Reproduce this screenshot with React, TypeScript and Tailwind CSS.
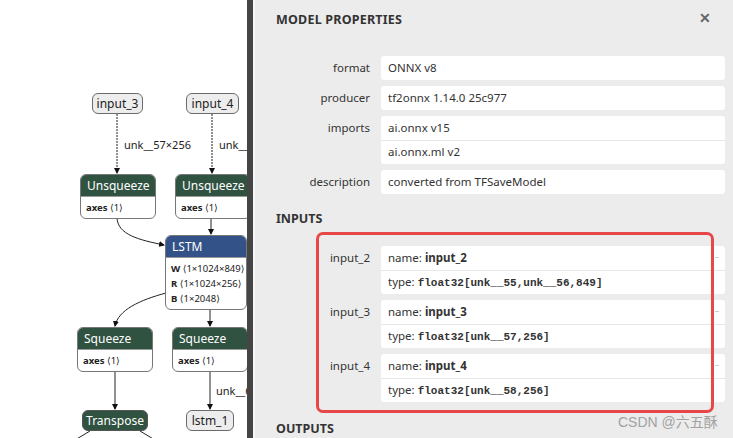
import React from "react";

const ui = { fontFamily: '"Noto Sans", "Open Sans", sans-serif' };
const mono = { fontFamily: '"Liberation Mono", "DejaVu Sans Mono", monospace' };

function Ghost({ label, x, y, w }: { label: string; x: number; y: number; w: number }) {
  return (
    <div
      className="absolute h-[21px] rounded-[6px] border border-[#6b6b6b] bg-[#ededed] text-[12px] leading-[19px] text-[#222] text-center"
      style={{ left: x, top: y, width: w }}
    >
      {label}
    </div>
  );
}

function OpNode({
  title,
  x,
  y,
  w,
  color = "bg-[#2f5241]",
  attrs,
}: {
  title: string;
  x: number;
  y: number;
  w: number;
  color?: string;
  attrs?: { k: string; v: string }[];
}) {
  return (
    <div
      className="absolute rounded-[6px] border border-[#777] overflow-hidden bg-white"
      style={{ left: x, top: y, width: w }}
    >
      <div className={`${color} h-[21px] px-[6px] text-[12px] leading-[21px] text-white`}>{title}</div>
      {attrs && (
        <div className="border-t border-[#999] px-[5px] py-[3px] text-[9.5px] text-[#222]">
          {attrs.map((a) => (
            <div key={a.k} className="leading-[15px] whitespace-nowrap">
              <span className="font-bold">{a.k}</span>{" "}
              <span style={{ fontFamily: '"DejaVu Sans", sans-serif' }}>⟨</span>
              {a.v}
              <span style={{ fontFamily: '"DejaVu Sans", sans-serif' }}>⟩</span>
            </div>
          ))}
        </div>
      )}
    </div>
  );
}

function Graph() {
  return (
    <div className="relative w-[247px] h-full overflow-hidden bg-white" style={ui}>
      <svg className="absolute inset-0" width="247" height="438">
        <defs>
          <marker id="ah" markerWidth="6" markerHeight="6" refX="5" refY="3" orient="auto">
            <path d="M0,0 L6,3 L0,6 z" fill="#111" />
          </marker>
        </defs>
        <g stroke="#222" strokeWidth="1" fill="none" markerEnd="url(#ah)">
          <path d="M117,114 L117,173" strokeDasharray="2 1" />
          <path d="M212,114 L212,173" strokeDasharray="2 1" />
          <path d="M117,217 C117,235 140,240 164,245" />
          <path d="M211,217 L211,234" />
          <path d="M166,293 C140,300 118,310 115,326" />
          <path d="M210,308 L210,326" />
          <path d="M115,370 L115,409" />
          <path d="M210,370 L210,409" />
        </g>
        <g stroke="#222" strokeWidth="1" fill="none">
          <path d="M90,431 L75,440" />
          <path d="M140,431 L155,440" />
        </g>
      </svg>
      <div className="absolute left-[124px] top-[137px] text-[11px] text-[#222]">unk__57×256</div>
      <div className="absolute left-[219px] top-[137px] text-[11px] text-[#222] whitespace-nowrap">unk__58×256</div>
      <div className="absolute left-[216px] top-[383px] text-[11px] text-[#222] whitespace-nowrap">unk__60×256</div>
      <Ghost label="input_3" x={92} y={93} w={51} />
      <Ghost label="input_4" x={186} y={93} w={53} />
      <OpNode title="Unsqueeze" x={80} y={174} w={76} attrs={[{ k: "axes", v: "1" }]} />
      <OpNode title="Unsqueeze" x={175} y={174} w={76} attrs={[{ k: "axes", v: "1" }]} />
      <OpNode
        title="LSTM"
        x={165}
        y={235}
        w={82}
        color="bg-[#335288]"
        attrs={[
          { k: "W", v: "1×1024×849" },
          { k: "R", v: "1×1024×256" },
          { k: "B", v: "1×2048" },
        ]}
      />
      <OpNode title="Squeeze" x={77} y={327} w={76} attrs={[{ k: "axes", v: "1" }]} />
      <OpNode title="Squeeze" x={172} y={327} w={76} attrs={[{ k: "axes", v: "1" }]} />
      <div className="absolute left-[82px] top-[410px] w-[66px] h-[21px] rounded-[6px] border border-[#555] bg-[#2f5241] text-[12px] leading-[19px] text-white text-center">
        Transpose
      </div>
      <Ghost label="lstm_1" x={186} y={410} w={48} />
    </div>
  );
}

function Prop({ label, values }: { label: string; values: React.ReactNode[] }) {
  return (
    <div className="flex gap-[11px]">
      <div className="w-[94px] shrink-0 text-right text-[11.5px] leading-[24px] text-[#333]">{label}</div>
      <div className="flex-1 rounded-[3px] bg-white">
        {values.map((v, i) => (
          <div
            key={i}
            className={`relative px-[7px] text-[11.5px] text-[#333] ${i > 0 ? "h-[24px] leading-[22px] border-t border-[#e6e6e6]" : "h-[24px] leading-[24px]"}`}
          >
            {v}
          </div>
        ))}
      </div>
    </div>
  );
}

function InputRow({ name, type }: { name: string; type: string }) {
  return (
    <Prop
      label={name}
      values={[
        <>
          name: <span className="font-bold">{name}</span>
          <span className="absolute right-[6px] top-[11px] w-[4px] h-px bg-[#ccc]" />
        </>,
        <>
          type:{" "}
          <span className="font-bold text-[11px]" style={mono}>
            {type}
          </span>
        </>,
      ]}
    />
  );
}

export default function App() {
  return (
    <div className="flex w-[733px] h-[438px] overflow-hidden bg-white" style={ui}>
      <Graph />
      <div className="w-[6px] bg-[#454545]" />
      <div className="w-[2px] bg-[#f6f6f6]" />
      <div className="relative flex-1 bg-[#ececec] pl-[21px] pr-[8px]">
        <div className="flex items-center justify-between h-[40px]">
          <div className="text-[12.5px] font-bold tracking-[0.2px] text-[#333]">MODEL PROPERTIES</div>
          <div className="mr-[14px] -mt-[4px] text-[14px] font-bold leading-none text-[#666]">✕</div>
        </div>
        <div className="mt-[16px] flex flex-col gap-[6px]">
          <Prop label="format" values={["ONNX v8"]} />
          <Prop label="producer" values={["tf2onnx 1.14.0 25c977"]} />
          <Prop label="imports" values={["ai.onnx v15", "ai.onnx.ml v2"]} />
          <Prop label="description" values={["converted from TFSaveModel"]} />
        </div>
        <div className="mt-[16px] text-[12.5px] font-bold text-[#333]">INPUTS</div>
        <div className="mt-[17px] flex flex-col gap-[6px]">
          <InputRow name="input_2" type="float32[unk__55,unk__56,849]" />
          <InputRow name="input_3" type="float32[unk__57,256]" />
          <InputRow name="input_4" type="float32[unk__58,256]" />
        </div>
        <div className="mt-[18px] text-[12.5px] font-bold text-[#333]">OUTPUTS</div>
        <div className="absolute left-[61px] top-[232px] w-[398px] h-[181px] rounded-[7px] border-[3px] border-[#e8474a] pointer-events-none" />
        <div
          className="absolute left-[363px] top-[412px] text-[14px] text-[#9a9a9a] opacity-90"
          style={{ fontFamily: '"Liberation Sans", "Noto Sans CJK SC", sans-serif' }}
        >
          CSDN @六五酥
        </div>
      </div>
    </div>
  );
}
